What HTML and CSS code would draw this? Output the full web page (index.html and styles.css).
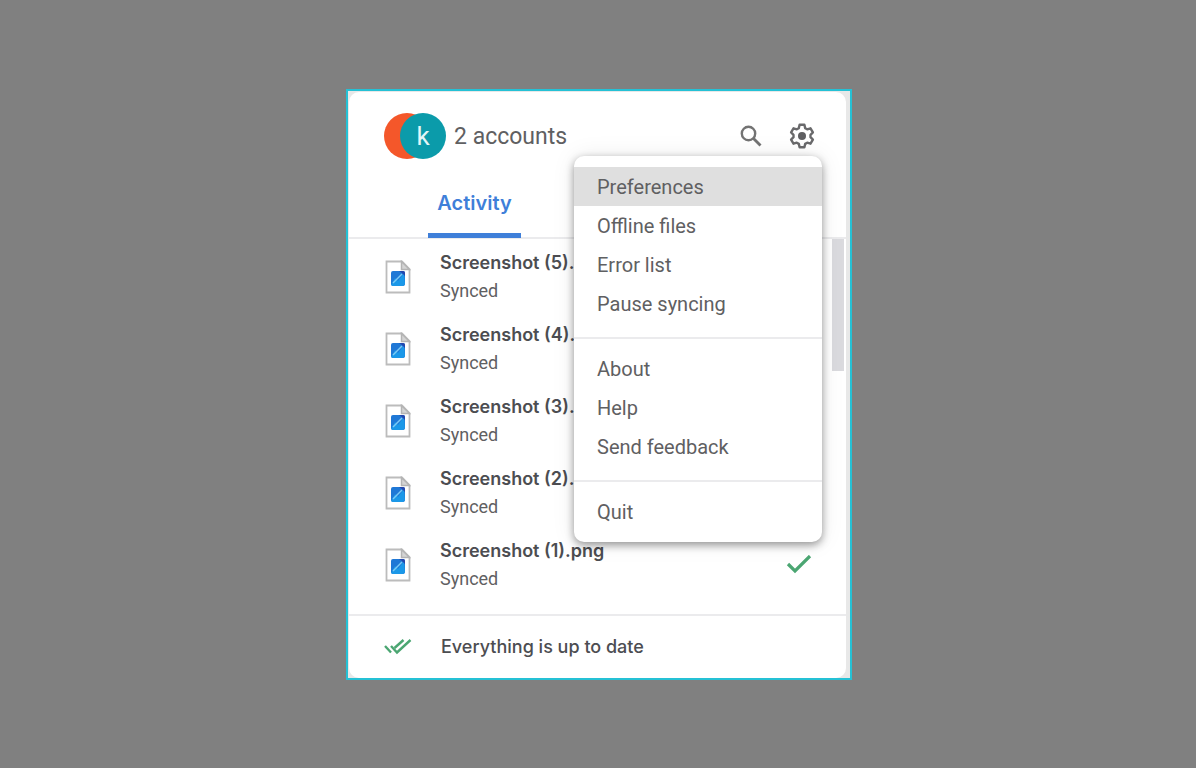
FILE: index.html
```
<!DOCTYPE html>
<html lang="en">
<head>
  <meta charset="UTF-8">
  <meta name="viewport" content="width=device-width, initial-scale=1.0">
  <title>Sync activity</title>
  <link rel="stylesheet" href="styles.css">
</head>
<body>
  <svg class="sprite" aria-hidden="true">
    <symbol id="file" viewBox="0 0 26 34">
      <path d="M1.5 1.500H17L24.500 9V32.500H1.500Z" fill="#fff" stroke="#bcbcbc" stroke-width="1.800"/>
      <path d="M16.500 1.500V9.500H24.500Z" fill="#d4d4d4" stroke="#b4b4b4" stroke-width="1.500"/>
      <rect x="6" y="11" width="14" height="15" rx="2" fill="#1f78d6"/>
      <path d="M6 25L10 18L13 21L19 13L20 24L18 26H8Z" fill="#1b98e8"/>
      <path d="M8 23L17 14" stroke="#7ccaf5" stroke-width="1.500"/>
      <path d="M14 11H18Q20 11 20 13V16L17 13Z" fill="#2446ad"/>
    </symbol>
  </svg>

  <div class="window">
    <main class="card">
      <header class="top">
        <div class="avatars">
          <span class="avatar orange"></span>
          <span class="avatar teal">k</span>
        </div>
        <h1>2 accounts</h1>
        <button class="icon-btn" type="button" aria-label="Search">
          <svg width="24" height="24" viewBox="0 0 24 24" fill="none" stroke="#737373">
            <circle cx="9.500" cy="9.500" r="6.700" stroke-width="2.400"/>
            <path d="M14.500 14.500L21.500 21.500" stroke-width="2.800"/>
          </svg>
        </button>
        <button class="icon-btn" type="button" aria-label="Settings">
          <svg width="26" height="26" viewBox="0 0 26 26" fill="none" stroke="#69696b">
            <path d="M10.600 1.800H15.400L16.200 5.100L18.200 6.300L21.500 5.300L23.900 9.400L21.500 11.800V14.200L23.900 16.600L21.500 20.700L18.200 19.700L16.200 20.900L15.400 24.200H10.600L9.800 20.900L7.800 19.700L4.500 20.700L2.100 16.600L4.500 14.200V11.800L2.100 9.400L4.500 5.300L7.800 6.300L9.800 5.100Z" stroke-width="2.400" stroke-linejoin="round"/>
            <circle cx="13" cy="13" r="4" fill="#5f5f62" stroke="none"/>
          </svg>
        </button>
      </header>

      <nav class="tabs">
        <a class="tab" href="#activity">Activity</a>
      </nav>

      <section class="activity" id="activity">
        <ul class="files">
          <li>
            <svg class="file-icon"><use href="#file"/></svg>
            <div class="info"><h2>Screenshot (5).</h2><p>Synced</p></div>
          </li>
          <li>
            <svg class="file-icon"><use href="#file"/></svg>
            <div class="info"><h2>Screenshot (4).</h2><p>Synced</p></div>
          </li>
          <li>
            <svg class="file-icon"><use href="#file"/></svg>
            <div class="info"><h2>Screenshot (3).</h2><p>Synced</p></div>
          </li>
          <li>
            <svg class="file-icon"><use href="#file"/></svg>
            <div class="info"><h2>Screenshot (2).</h2><p>Synced</p></div>
          </li>
          <li>
            <svg class="file-icon"><use href="#file"/></svg>
            <div class="info"><h2>Screenshot (1).png</h2><p>Synced</p></div>
            <svg class="check" viewBox="0 0 26 20">
              <path d="M2 9L9 16L24 1" fill="none" stroke="#4ba672" stroke-width="3.200"/>
            </svg>
          </li>
        </ul>
        <div class="scrollbar"></div>
      </section>

      <footer class="status">
        <svg width="28" height="18" viewBox="0 0 28 18" fill="none" stroke="#4ba672" stroke-width="2.400">
          <path d="M1 8L7 14.500"/>
          <path d="M7 8L13 14.500L26.500 2"/>
          <path d="M10.500 10L19.500 2"/>
        </svg>
        <p>Everything is up to date</p>
      </footer>

      <div class="menu" role="menu">
        <button class="active" type="button" role="menuitem">Preferences</button>
        <button type="button" role="menuitem">Offline files</button>
        <button type="button" role="menuitem">Error list</button>
        <button type="button" role="menuitem">Pause syncing</button>
        <hr>
        <button type="button" role="menuitem">About</button>
        <button type="button" role="menuitem">Help</button>
        <button type="button" role="menuitem">Send feedback</button>
        <hr>
        <button type="button" role="menuitem">Quit</button>
      </div>
    </main>
  </div>
</body>
</html>
```
FILE: styles.css
```
* {
  box-sizing: border-box;
}
body {
  margin: 0;
  padding: 1px 0 0 2px;
  min-height: 100vh;
  display: flex;
  align-items: center;
  justify-content: center;
  background-color: #808080;
  font-family: Roboto, sans-serif;
  color: #5f6062;
}
h1, h2, p, ul {
  margin: 0;
  padding: 0;
}
button {
  border: none;
  background: none;
  padding: 0;
  font: inherit;
  color: inherit;
}
.sprite {
  position: absolute;
  width: 0;
  height: 0;
}
.window {
  width: 100%;
  max-width: 506px;
  border: 2px solid #25c1d5;
  background: #e8e8e8;
  padding: 1px 4px 0 1px;
}
.card {
  position: relative;
  background: #fff;
  border-radius: 10px;
}
.top {
  display: flex;
  align-items: center;
  height: 88px;
  padding: 0 31px 0 35px;
}
.avatars {
  display: flex;
}
.avatar {
  width: 46px;
  height: 46px;
  border-radius: 50%;
}
.orange {
  background: #f4572a;
}
.teal {
  margin-left: -30px;
  background: #0b9baa;
  color: #e4f6f7;
  font-size: 26px;
  line-height: 46px;
  text-align: center;
}
.top h1 {
  flex: 1;
  margin-left: 8px;
  font-size: 23px;
  font-weight: 400;
}
.icon-btn {
  display: flex;
}
.icon-btn + .icon-btn {
  margin-left: 26px;
}
.tabs {
  display: flex;
  height: 59px;
  padding-left: 79px;
  border-bottom: 2px solid #ebebed;
}
.tab {
  width: 93px;
  height: 58px;
  border-bottom: 5px solid #3f7fd9;
  color: #3f7fd9;
  font-family: Inter, sans-serif;
  font-size: 20px;
  font-weight: 600;
  line-height: 46px;
  text-align: center;
  text-decoration: none;
}
.activity {
  display: flex;
  padding-right: 2px;
}
.files {
  flex: 1;
  list-style: none;
  padding: 2px 0 13px;
}
.files li {
  display: flex;
  align-items: center;
  height: 72px;
  padding: 0 20px 0 36px;
}
.file-icon {
  width: 26px;
  height: 34px;
}
.info {
  flex: 1;
  margin-left: 29px;
}
.info h2,
.status p {
  font-family: Inter, sans-serif;
  font-size: 18px;
  font-weight: 600;
  line-height: 28px;
  color: #4c4d51;
}
.status p {
  font-weight: 500;
}
.info p {
  font-size: 18px;
  line-height: 28px;
}
.check {
  width: 26px;
  height: 20px;
}
.scrollbar {
  width: 12px;
  height: 132px;
  background: #dadade;
}
.status {
  display: flex;
  align-items: center;
  gap: 29px;
  height: 64px;
  padding-left: 35px;
  border-top: 2px solid #ebebed;
}
.menu {
  position: absolute;
  top: 64px;
  right: 24px;
  width: 248px;
  padding: 11px 0;
  background: #fff;
  border-radius: 10px;
  box-shadow: 0 3px 8px rgba(0, 0, 0, 0.4), 0 0 24px rgba(0, 0, 0, 0.08);
}
.menu button {
  display: block;
  width: 100%;
  height: 39px;
  padding-left: 23px;
  font-size: 20px;
  text-align: left;
}
.menu .active {
  background: #dfdfdf;
}
.menu hr {
  height: 2px;
  margin: 14px 0 10px;
  border: none;
  background: #ebebed;
}
```
